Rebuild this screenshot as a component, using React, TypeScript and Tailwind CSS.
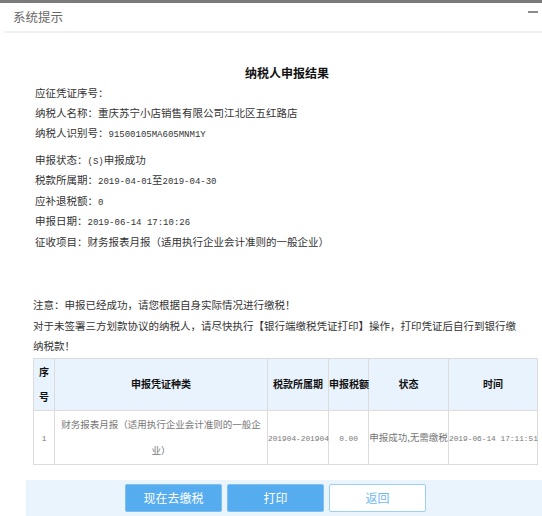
import React from 'react'

const cjk = '"Noto Sans CJK SC", "Noto Sans", sans-serif'
const mono = '"Liberation Mono", "Noto Sans CJK SC", monospace'

// ascii parts of the original are set in a narrow monospace face
function Mono({ children, small = false }: { children: React.ReactNode; small?: boolean }) {
  return (
    <span className={small ? 'text-[7.8px] leading-none' : 'text-[9px] leading-none'} style={{ fontFamily: mono }}>
      {children}
    </span>
  )
}

const infoTop = [
  { label: '应征凭证序号：', value: '' },
  { label: '纳税人名称：', value: '重庆苏宁小店销售有限公司江北区五红路店' },
  { label: '纳税人识别号：', value: <Mono>91500105MA605MNM1Y</Mono> },
]

const cell = 'border border-[#dcdcdc] p-0 text-center'

export default function App() {
  return (
    <div
      className="w-[542px] h-[516px] bg-white overflow-hidden flex flex-col text-[#333]"
      style={{ fontFamily: cjk }}
    >
      {/* window frame */}
      <div className="h-[3px] shrink-0 bg-[#7b7b7b]" />
      <div className="h-[28px] shrink-0 flex items-center justify-between pl-[13px] pr-[4px]">
        <span className="text-[12.5px] text-[#666]">系统提示</span>
        <span className="w-[10px] h-[2px] bg-[#8c8c8c] mb-[10px]" />
      </div>
      <div className="ml-[4px] h-[2px] shrink-0 bg-[#f0f0f0]" />

      {/* result */}
      <div className="shrink-0 pl-[33px] pt-[30px] text-[10.5px]">
        <h3 className="w-[508px] text-center font-bold text-[12px] leading-[20px] text-[#111]">
          纳税人申报结果
        </h3>
        <div className="pl-[2px] leading-[20px]">
          {infoTop.map((row) => (
            <div key={row.label}>
              {row.label}
              {row.value}
            </div>
          ))}
        </div>
        <div className="pl-[2px] mt-[7px] leading-[20.4px]">
          <div>
            申报状态：<Mono>(S)</Mono>申报成功
          </div>
          <div>
            税款所属期：<Mono>2019-04-01</Mono>至<Mono>2019-04-30</Mono>
          </div>
          <div>
            应补退税额：<Mono>0</Mono>
          </div>
          <div>
            申报日期：<Mono>2019-06-14 17:10:26</Mono>
          </div>
          <div>征收项目：财务报表月报（适用执行企业会计准则的一般企业）</div>
        </div>

        <div className="mt-[43px] leading-[20.5px] w-[490px]">
          <p>注意：申报已经成功，请您根据自身实际情况进行缴税！</p>
          <p>
            对于未签署三方划款协议的纳税人，请尽快执行【银行端缴税凭证打印】操作，打印凭证后自行到银行缴纳税款！
          </p>
        </div>

        {/* voucher table */}
        <table className="mt-[1px] w-[504px] table-fixed border-collapse">
          <colgroup>
            <col className="w-[21px]" />
            <col className="w-[213px]" />
            <col className="w-[61px]" />
            <col className="w-[40px]" />
            <col className="w-[80px]" />
            <col className="w-[89px]" />
          </colgroup>
          <thead>
            <tr className="bg-[#e8f3fd] text-[10px] font-bold text-[#111] leading-[25.5px]">
              <th className={cell}>
                序<br />号
              </th>
              <th className={cell}>申报凭证种类</th>
              <th className={`${cell} whitespace-nowrap`}>税款所属期</th>
              <th className={`${cell} whitespace-nowrap`}>申报税额</th>
              <th className={cell}>状态</th>
              <th className={cell}>时间</th>
            </tr>
          </thead>
          <tbody>
            <tr className="text-[9.5px] text-[#777] leading-[26.5px]">
              <td className={cell}>
                <Mono small>1</Mono>
              </td>
              <td className={`${cell} px-[5px]`}>财务报表月报（适用执行企业会计准则的一般企业）</td>
              <td className={`${cell} whitespace-nowrap`}>
                <Mono small>201904-201904</Mono>
              </td>
              <td className={cell}>
                <Mono small>0.00</Mono>
              </td>
              <td className={`${cell} whitespace-nowrap`}>申报成功,无需缴税</td>
              <td className={`${cell} whitespace-nowrap`}>
                <Mono small>2019-06-14 17:11:51</Mono>
              </td>
            </tr>
          </tbody>
        </table>
      </div>

      {/* actions */}
      <div className="shrink-0 mt-[15px] ml-[26px] h-[37px] bg-[#eaf4fd] pt-[4px] pl-[99px] flex gap-[5px] items-start">
        <button className="w-[97px] h-[28px] rounded-[2px] bg-[#55acef] border border-[#7cbff3] text-white text-[12px]">
          现在去缴税
        </button>
        <button className="w-[97px] h-[28px] rounded-[2px] bg-[#55acef] border border-[#7cbff3] text-white text-[12px]">
          打印
        </button>
        <button className="w-[97px] h-[28px] rounded-[2px] bg-white border border-[#9ccff6] text-[#70b8f1] text-[12px]">
          返回
        </button>
      </div>
    </div>
  )
}
